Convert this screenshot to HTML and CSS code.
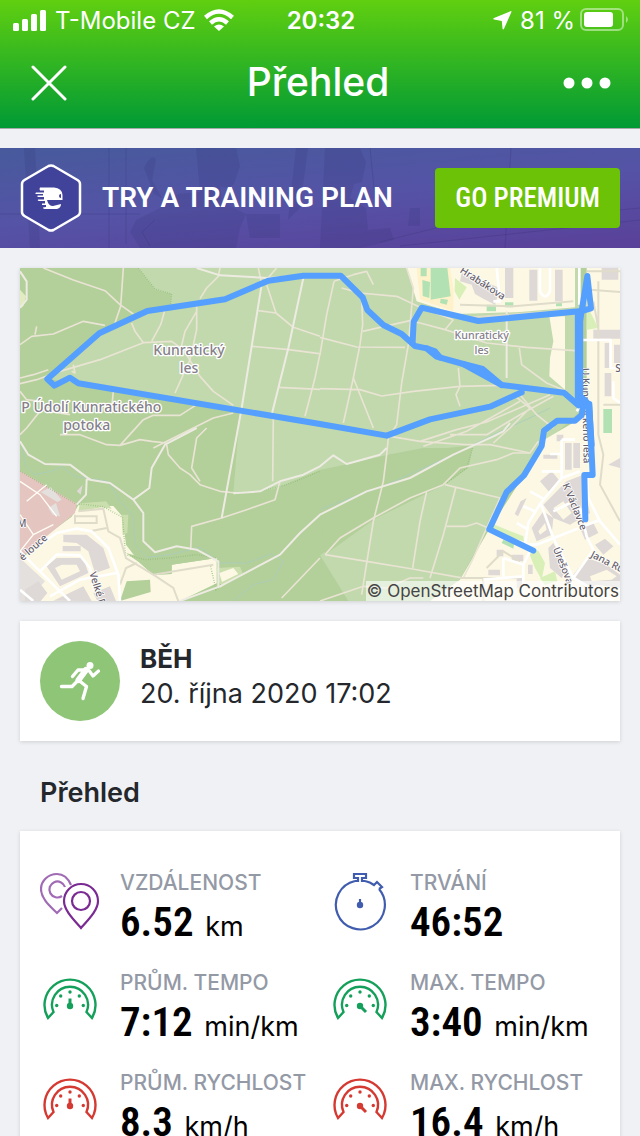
FILE: index.html
```
<!DOCTYPE html>
<html lang="cs">
<head>
<meta charset="utf-8">
<meta name="viewport" content="width=device-width, initial-scale=1">
<title>Přehled</title>
<link rel="stylesheet" href="styles.css">
</head>
<body>
<svg class="defs" aria-hidden="true">
  <defs>
    <g id="gauge" fill="none" stroke="currentColor" stroke-width="2.400">
      <path d="M5 40A25.500 25.500 0 1 1 49 40L43.500 34A18 18 0 1 0 10.500 34Z"/>
      <g fill="currentColor" stroke="none"><circle cx="13.700" cy="27.500" r="1.700"/><circle cx="17.700" cy="18" r="1.700"/><circle cx="27" cy="14" r="1.700"/><circle cx="36.300" cy="18" r="1.700"/><circle cx="40.300" cy="27.500" r="1.700"/><circle cx="27" cy="28" r="3.200"/></g>
    </g>
  </defs>
</svg>
<div class="app">
  <header class="top">
    <div class="status">
      <div class="carrier">
        <svg width="34" height="22" viewBox="0 0 34 22" fill="#fff"><rect x="0" y="14" width="6" height="8" rx="1.5"/><rect x="9" y="10" width="6" height="12" rx="1.5"/><rect x="18" y="5" width="6" height="17" rx="1.5"/><rect x="27" y="1" width="6" height="21" rx="1.5"/></svg>
        <span>T-Mobile CZ</span>
        <svg class="wifi" width="30" height="22" viewBox="0 0 30 22" fill="none" stroke="#fff" stroke-width="4.400"><path d="M1.500 8.500Q15-3.500 28.500 8.500"/><path d="M6.500 14Q15 6.500 23.500 14"/><path d="M15 22L10 17.500Q15 13.500 20 17.500Z" fill="#fff" stroke="none"/></svg>
      </div>
      <time class="clock">20:32</time>
      <div class="power">
        <svg width="19" height="19" viewBox="0 0 19 19" fill="#fff"><path d="M17.500.2Q19-.2 18.300 1.300L11 17.800Q10 19.200 9.500 17.400L8.800 10 1 8.600Q-.5 7.800 1 6.900Z"/></svg>
        <span>81 %</span>
        <svg class="battery" width="49" height="24" viewBox="0 0 49 24"><rect x="1" y="1" width="42" height="21" rx="5" fill="none" stroke="#fff" stroke-opacity=".45" stroke-width="2"/><rect x="4" y="4" width="29" height="15" rx="3" fill="#fff"/><path d="M46 8Q50 11.500 46 15Z" fill="#fff" fill-opacity=".45"/></svg>
      </div>
    </div>
    <nav class="bar">
      <button class="icon-btn" type="button" aria-label="Zavřít"><svg width="36" height="36" viewBox="0 0 36 36" stroke="#fff" stroke-width="3" stroke-linecap="round"><path d="M2 2L34 34M34 2L2 34"/></svg></button>
      <h1>Přehled</h1>
      <button class="icon-btn" type="button" aria-label="Další"><svg width="48" height="12" viewBox="0 0 48 12" fill="#fff"><circle cx="6" cy="6" r="5.500"/><circle cx="24" cy="6" r="5.500"/><circle cx="42" cy="6" r="5.500"/></svg></button>
    </nav>
  </header>
  <main class="content">
    <section class="promo">
      <svg class="promo-art" viewBox="0 0 640 100" preserveAspectRatio="xMidYMid slice" aria-hidden="true">
        <g fill="#2c2869" fill-opacity=".14"><path d="M24 0H35L40 100H30Z"/><path d="M196 0H236L240 18 234 36Q226 42 220 38L222 54 246 66 240 80 236 100H140L130 84 136 72 160 60 178 46 200 44Z"/><path d="M144 20Q152 4 156 12L152 32 162 50 154 46Z"/><path d="M246 66H280V90H250ZM296 0H308L300 60 288 72Z"/><path d="M325 0H360L366 14 362 34 354 36 350 50 366 60 368 82 390 80 394 92 360 100H320Z"/><path d="M410 60H420V78H408Z"/></g>
        <g fill="none" stroke="#2c2869" stroke-opacity=".2"><path d="M109 0V100M126 0V96M0 66H140M155 72L142 84 150 98M511 0L505 100M370 0L376 60M380 94L436 80 640 60"/><path d="M400 98L640 72"/></g>
      </svg>
      <svg class="emblem" width="62" height="68" viewBox="0 0 62 68"><path d="M28.500 2Q31 .8 33.500 2L57.500 16Q60 17.500 60 20V48Q60 50.500 57.500 52L33.500 66Q31 67.200 28.500 66L4.500 52Q2 50.500 2 48V20Q2 17.500 4.500 16Z" fill="#41439b" stroke="#fff" stroke-width="2.500"/><path d="M20 23.500H34Q42 24 42.500 31V36H27Q28.500 42 33 42L41 40Q41 44 37 45H26Q23 45 23 43.500L26 43V41H22V39.500H25V37H19Q17 36.500 18 35.500H24V33H17.500V31.500H23V30H16Q14.500 29.500 16 28.500H24V26.500H20Q19 25 20 23.500Z" fill="#fff"/><path d="M41 30A2 2 0 1 0 41 34Z" fill="#41439b"/></svg>
      <p>TRY A TRAINING PLAN</p>
      <button class="premium" type="button">GO PREMIUM</button>
    </section>

    <section class="map card" aria-label="Mapa">
      <svg class="map-art" viewBox="0 0 1800 999" preserveAspectRatio="xMidYMid slice">
        <rect width="1800" height="999" fill="#b3cf9a"/>
        <path fill="#c1d9ac" d="M355 0L405 65 455 78 450 115 380 130 238 196 82 333 175 346 660 424 640 676 760 664 900 606 1000 585 1104 560 1210 540 1358 540 1345 600 1280 645 1220 676 1060 750 900 862 985 999 1230 999 1320 935 1420 750 1540 560 1680 430V0Z"/>
        <path fill="#b3cf9a" d="M1110 560L1355 532 1340 600 1278 648 1065 752 915 860 900 720Z"/>
        <path fill="#e2ecc0" d="M0 65L18 85 10 115 0 120Z"/>
        <g fill="#fcf8e4">
          <path d="M1160 0L1190 100 1310 138 1500 132 1665 118V0ZM1700 0H1800V999H1230L1320 935 1410 780 1512 622 1565 520 1700 440ZM1588 145H1635V365L1588 325 1590 270 1600 220Z"/>
          <path d="M0 880L60 816 155 746 175 712 280 714 308 746 318 830 360 885 400 920 455 918V890L590 870V946L480 999H0Z"/>
        </g>
        <path fill="#e5c5c0" d="M0 608L170 706 165 735 0 870Z"/>
        <path fill="#e4e0de" d="M0 870L75 940 20 999H0ZM62 672L92 658 125 695 112 702ZM85 720L108 705 120 745 98 740Z"/>
        <path fill="#cadfad" d="M180 706L258 700 275 722 245 718 175 730ZM305 740H325L322 795 308 800ZM590 900L660 896 668 915 600 960Z"/>
        <path fill="#b3cf9a" d="M318 855L360 885 400 920 455 918V890L590 870 540 855 450 868 360 866ZM320 940L390 935 392 972 300 999Z"/>
        <path fill="#fcf8e4" d="M598 915L640 900 655 918 606 942Z"/>

        <g fill="#ded8d6">
          <path d="M80 895L110 870H190L205 915 120 955ZM15 965L55 940 82 975 62 999H15ZM100 998L190 955 215 999ZM220 975L270 955 288 999H232ZM130 800H200L250 840 270 900 225 915 205 850 170 825 130 822ZM128 834H182V850H128ZM170 670L188 650 182 680Z"/>
          <path d="M1325 15L1440 60 1425 110 1390 92 1365 78 1355 50 1320 40ZM1455 0H1480V90H1455ZM1528 5H1552V98H1528ZM1605 5H1628V100H1605ZM1745 0H1795V35H1745ZM1754 225H1768V300H1754ZM1782 230H1800V285H1782ZM1754 315H1774V385H1754ZM1720 185H1800V212H1720Z"/>
          <path d="M1635 525H1655V605H1635ZM1660 525H1680V600H1660ZM1610 500H1630V520H1610ZM1570 560H1612V572H1570ZM1560 640L1595 610 1620 640 1590 675ZM1502 700L1520 690 1494 745 1484 738ZM1535 780L1570 730 1600 750 1595 800 1550 820ZM1640 640L1690 620 1700 690 1710 735 1650 770 1600 750 1570 710ZM1680 780L1720 765 1735 795 1695 815ZM1725 830L1755 812 1780 835 1750 860ZM1585 840L1600 825 1640 900 1625 930 1590 900ZM1660 920L1700 870 1760 890 1800 920V960L1730 950 1700 965ZM1430 845H1450V865H1430ZM1405 905H1440V922H1405ZM1475 860H1510V880H1475ZM1524 890H1538V918H1524ZM1490 930H1512V960H1490ZM1765 590L1800 570V600Z"/>
        </g>
        <path fill="#fcf8e4" d="M105 900L125 890H170L180 910 125 935ZM1555 790L1575 765 1580 785 1560 800ZM1600 720L1630 700 1655 735 1630 755ZM1710 925L1760 905 1790 925 1775 935 1715 940Z"/>
        <path fill="#fff1ca" d="M1190 0H1290L1300 60 1300 130 1200 95Z"/>
        <path fill="#b2e2b4" d="M1202 0H1220V25H1202ZM1232 0H1282L1292 85 1232 95ZM1207 36L1230 42 1228 90 1208 84ZM1262 92L1284 95 1280 110 1260 105ZM1400 110H1428V130H1400ZM1455 103H1480V118H1455ZM1608 102H1626V115H1608ZM1750 423H1776V495H1750ZM1450 815L1482 828 1480 842 1445 825Z"/>
        <path fill="#d8efb8" d="M1305 30L1340 58 1318 95 1304 70ZM1702 115L1735 180 1700 185ZM1418 768L1510 805 1512 820 1410 790ZM1525 850L1555 848 1575 885 1565 935 1545 900ZM1560 930L1605 910 1612 940 1575 950Z"/>

        <g fill="none" stroke="#a9cdbd" stroke-width="2.500">
          <path d="M5 530L18 595 42 620 95 610 125 595 165 625 210 632 265 640 300 700 340 745 345 830 380 868 450 860 540 838 600 885 680 885 755 858 790 880 760 935 700 950 640 999"/>
          <path d="M900 724L1100 650 1300 560 1420 500 1540 445 1590 420"/>
        </g>
        <g fill="none" stroke="#8fbd78" stroke-width="4" stroke-dasharray="2 5">
          <path d="M355 0L405 63 455 78 452 110M0 610L165 706 250 716 308 748 316 860 375 875 450 870 530 860 590 870M572 895L588 965 604 945M640 674L715 670 800 650 900 610M1358 540L1340 600 1280 645"/>
        </g>

        <g fill="none" stroke="#e9e4d4" stroke-width="5" stroke-linejoin="round">
          <path d="M70 0L160 36 255 68 300 110 340 138"/><path d="M310 0L302 115 285 165"/>
          <path d="M0 230L35 205 100 198 190 160 255 172"/><path d="M50 175L45 200"/>
          <path d="M0 347L50 335 120 310 240 275 370 224 455 220 490 245 540 325 580 370 640 412"/>
          <path d="M335 165L345 190 370 224M435 125L422 170 395 220M530 115V185L510 275 465 375M530 130L495 190 483 240"/>
          <path d="M600 0L595 25 560 60 540 92"/>
          <path d="M715 0L723 38 735 40 770 0M740 50L768 135 715 128M768 135L820 178 900 205M695 235L800 244 898 257M900 257L885 330 855 445M775 358L900 364M0 330L40 320 85 305M155 310L165 315 160 290"/>
          <path d="M0 370L20 395 60 400 90 430 150 440M0 500L20 480 60 430 120 410M120 500L180 500 260 530 300 532 370 455M300 532L360 515 395 520 440 525M370 455L400 442H480L530 410M280 370L275 420"/>
          <path d="M440 530L445 560 480 600 510 620 540 650 600 670 650 675M640 435L580 450 520 480 400 540M560 480L530 510 515 600 540 640M760 450L758 640"/>
          <path d="M605 750L680 725 765 695 780 640M605 750L515 775 512 845M785 990L900 870"/>
          <path d="M942 40L1000 20 1040 10 1060 50"/>
          <path d="M965 60L1020 75 1130 85 1205 120 1300 155"/><path d="M1025 90L1028 170 1020 230 1000 330 1060 480"/>
          <path d="M900 208L1010 237 1155 238M1028 190L1170 158 1200 165 1275 185 1300 155M1275 185L1400 225 1520 238 1665 248M1498 240L1505 290 1580 345 1640 370"/>
          <path d="M900 362L1020 365 1085 384 1180 370 1320 355 1440 352M1000 330L970 465M1315 300L1320 355 1308 380 1320 415"/>
          <path d="M942 40L920 140 900 260"/>
          <path d="M1105 510L1100 560 1090 640 1060 760 1025 980M1110 505L1200 520 1335 530 1410 530 1530 555M1200 520L1310 485 1400 462 1590 380M1210 535L1340 490 1500 400M1290 500L1400 500 1500 440 1600 385M1420 525L1470 480 1530 420 1480 380M1500 380L1550 440 1600 480"/>
          <path d="M1275 650L1440 690M1220 670L1200 760 1178 900M1307 660L1270 800 1230 930M1280 775L1340 775 1370 765 1405 780"/>
          <path d="M915 860L960 810 1060 750 1170 690 1270 650 1320 600 1430 575 1480 555 1530 555 1555 520"/>
          <path d="M915 860L1040 880 1178 903 1300 925 1330 930M900 999L1030 955 1100 960 1170 930 1210 930M1330 930L1360 870 1440 690"/>
          <path d="M1160 0L1180 60 1165 230 1145 345 1130 470 1105 510"/>
        </g>
        <g fill="none" stroke="#eeebe3" stroke-width="6" stroke-linejoin="round">
          <path d="M530 0L600 22 745 30 900 18M725 50L665 420 605 750M850 30L805 240 755 440"/>
          <path d="M0 520L25 560 75 588 150 590 210 635 270 645 340 695 370 735 370 820 405 853 470 835 530 845 595 880V955"/>
          <path d="M340 695L388 660 395 600 435 530 530 480"/>
          <path d="M640 676L720 670 780 640 850 620 900 595 940 562 980 588 1080 560 1100 540"/>
          <path d="M480 999L600 955 780 860 840 795 900 740 1040 670 1170 630 1300 560 1420 505 1450 490 1470 465"/>
          <path d="M1460 130V330M0 10L20 40 20 95 0 120M170 710L198 680 200 635 212 632"/>
        </g>
        <g fill="none" stroke="#e0dcca" stroke-width="6"><path d="M175 730L250 722 265 790 300 810 318 870 400 920 580 890M210 790L260 780M165 740V765H230V745H165M300 950L318 900 350 885M400 920L460 960 475 999M1320 150L1470 140 1665 125M1320 110L1480 115 1660 100M1700 10L1800 10M1710 65L1800 72M1720 100L1735 180M1735 40V500L1750 560 1740 650 1800 760M1750 410H1800"/><path d="M1320 930H1500M1390 999V930M1400 900L1450 850 1500 880"/></g>
        <g fill="none" stroke="#fffdf6" stroke-width="4"><path d="M0 640L60 680 110 745M20 700L80 650M0 740L40 800 100 770M40 800L0 850"/></g>
        <g fill="none" stroke="#fff" stroke-width="8" stroke-linejoin="round">
          <path d="M60 830L110 795 170 782 215 790 265 840 295 920 300 999M0 850L60 910 120 970 150 999M60 910L110 860 180 862 210 900 222 970M90 985L180 935 290 915M0 965L40 999"/>
          <path d="M1430 0L1440 100H1420M1560 0V70Q1575 100 1590 70V0M1678 0V110M1690 216H1772V300H1800M1780 340V390L1800 405M1690 400L1670 430"/>
          <path d="M1625 515H1665M1625 515V630M1565 610H1625M1590 558H1625M1530 670L1575 695M1510 715L1545 730M1490 765L1525 785M1625 630L1562 705 1600 810 1660 930 1720 845 1700 805 1680 720M1625 630L1680 610M1562 705L1525 765 1515 830 1550 830 1740 755M1700 620L1705 690 1740 760 1800 830M1660 930L1780 999M1530 850L1510 890V999M1450 870V930M1450 870L1510 890M1390 935L1510 925M1600 730L1650 705"/>
        </g>

        <g class="map-road">
          <text x="1318" y="12" transform="rotate(33 1318 12)">Hrabákova</text>
          <text x="8" y="880" transform="rotate(-42 8 880)">é louce</text>
          <text x="208" y="915" transform="rotate(73 208 915)">Velké P</text>
          <text x="1686" y="300" transform="rotate(89 1686 300)">U Kunratického lesa</text>
          <text x="1627" y="650" transform="rotate(68 1627 650)">K Václavce</text>
          <text x="1598" y="842" transform="rotate(68 1598 842)">Úrešova</text>
          <text x="1710" y="866" transform="rotate(27 1710 866)">Jana Růž</text>
          <text x="-8" y="776">M</text>
          <text x="1786" y="312">S</text>
        </g>
        <g fill="none" stroke="#559ffe" stroke-width="18" stroke-linejoin="round" stroke-linecap="round">
          <path d="M1540 848L1408 784 1460 672 1512 622 1565 534 1572 488 1612 458H1665L1685 441 1690 410"/>
          <path d="M1675 412L1632 374 1445 351 1330 288 1250 266 1220 241 1185 234 1145 198 1090 171 1042 126 1028 88 962 23H850L745 38 615 94 382 129 238 196 82 333 103 353 150 329 175 346 900 468 1100 503 1230 454 1410 416 1505 373"/>
          <path d="M1178 220L1181 161 1205 119 1375 159 1685 129 1713 121 1702 24 1680 160"/>
          <path d="M1330 288L1388 303 1445 351M1220 241L1245 250 1260 268"/>
          <path d="M1360 300L1400 320" stroke-width="22"/>
          <path d="M1677 140V405" stroke-width="25"/>
          <path d="M1686 390L1706 410 1714 530" stroke-width="20"/>
          <path d="M1708 408L1718 621H1693L1696 754"/>
        </g>
        <g class="map-place" text-anchor="middle">
          <text x="507" y="260">Kunratický</text><text x="507" y="314">les</text>
          <text x="214" y="431">P Údolí Kunratického</text><text x="200" y="485">potoka</text>
        </g>
        <g class="map-place small" text-anchor="middle"><text x="1385" y="214">Kunratický</text><text x="1385" y="259">les</text></g>
      </svg>
      <small>© OpenStreetMap Contributors</small>
    </section>

    <section class="activity card">
      <svg width="80" height="80" viewBox="0 0 80 80"><circle cx="40" cy="40" r="40" fill="#8fc577"/><g fill="none" stroke="#fff" stroke-linecap="round" stroke-linejoin="round"><circle cx="50" cy="24.500" r="3.500" fill="#fff" stroke="none"/><path d="M21.500 45.500H32L38 39.500" stroke-width="3.400"/><path d="M46 29L38.500 39" stroke-width="6"/><path d="M48 29H38L32.500 35.500M39 39.500L46.500 45.500 43 57.500" stroke-width="3.400"/><path d="M49 29.500L53 35 58.500 30" stroke-width="3.200"/></g></svg>
      <div><h2>BĚH</h2><time datetime="2020-10-20T17:02">20. října 2020 17:02</time></div>
    </section>

    <h2 class="section-title">Přehled</h2>
    <dl class="stats card">
      <div class="stat">
        <svg width="60" height="60" viewBox="0 -1 60 60" fill="none" stroke-width="2.200"><g stroke="#a06bb4"><path d="M31 13C28 6 23 2 17 2C8 2 1 9 1 17C1 27 11 35 17 41L22 36"/><path d="M22 24A8 8 0 1 1 25 15"/></g><g stroke="#7a2a92"><path d="M41 56C33 47 24 38 24 29A17 17 0 0 1 58 29C58 38 49 47 41 56Z"/><circle cx="41" cy="29" r="9"/></g></svg>
        <dt>VZDÁLENOST</dt><dd><b>6.52</b> <span>km</span></dd>
      </div>
      <div class="stat">
        <svg width="60" height="60" viewBox="0 -1 60 60" fill="none" stroke="#405cae" stroke-width="2.200"><path d="M25 9A24.500 24.500 0 1 0 49 17M25 9H28V6H24V2H36V6H32V9H35"/><path d="M35 9Q40 10 44 13L47 10 52 15 49 17"/><path d="M30 33V27"/><circle cx="30" cy="33" r="3.200" fill="#405cae" stroke="none"/></svg>
        <dt>TRVÁNÍ</dt><dd><b>46:52</b></dd>
      </div>
      <div class="stat pace">
        <svg width="60" height="60" viewBox="-3 -7 60 60"><use href="#gauge"/><path d="M27 28V20.500" stroke="currentColor" stroke-width="3"/></svg>
        <dt>PRŮM. TEMPO</dt><dd><b>7:12</b> <span>min/km</span></dd>
      </div>
      <div class="stat pace">
        <svg width="60" height="60" viewBox="-3 -7 60 60"><use href="#gauge"/><path d="M27 28L33 34" stroke="currentColor" stroke-width="3"/></svg>
        <dt>MAX. TEMPO</dt><dd><b>3:40</b> <span>min/km</span></dd>
      </div>
      <div class="stat speed">
        <svg width="60" height="60" viewBox="-3 -7 60 60"><use href="#gauge"/><path d="M27 28V20.500" stroke="currentColor" stroke-width="3"/></svg>
        <dt>PRŮM. RYCHLOST</dt><dd><b>8.3</b> <span>km/h</span></dd>
      </div>
      <div class="stat speed">
        <svg width="60" height="60" viewBox="-3 -7 60 60"><use href="#gauge"/><path d="M27 28L33 34" stroke="currentColor" stroke-width="3"/></svg>
        <dt>MAX. RYCHLOST</dt><dd><b>16.4</b> <span>km/h</span></dd>
      </div>
    </dl>
  </main>
</div>
</body>
</html>
```
FILE: styles.css
```
* { box-sizing: border-box; margin: 0; padding: 0; }
body { background: #f0f1f4; color: #24282c; font-family: Inter, Roboto, sans-serif; }
button { border: 0; background: none; color: inherit; font: inherit; cursor: pointer; }
svg { display: block; flex: none; }
.defs { position: absolute; width: 0; height: 0; }
.app { display: flex; flex-direction: column; height: 100vh; }

.top { flex: none; color: #fff; background: linear-gradient(#60cf10, #009a35); border-bottom: 1px solid #a6aaa8; }
.status { display: grid; grid-template-columns: 1fr auto 1fr; align-items: center; height: 40px; padding: 0 11px 0 13px; font-size: 24px; }
.carrier, .power { display: flex; align-items: center; gap: 8px; }
.power { justify-content: flex-end; }
.battery { margin-left: -3px; }
.clock { font-weight: 600; }
.bar { display: flex; align-items: center; justify-content: space-between; height: 88px; padding: 0 28px 2px 24px; }
.icon-btn { display: grid; place-items: center; width: 50px; height: 60px; }
.bar h1 { padding-bottom: 2px; font-size: 39px; font-weight: 500; line-height: 44px; }

.content { flex: 1; min-height: 0; overflow-y: auto; scrollbar-width: none; padding-top: 19px; }
.card { margin: 0 20px; background: #fff; box-shadow: 0 1px 4px rgba(0, 0, 0, .14); }

.promo { position: relative; display: flex; align-items: center; height: 100px; padding: 0 20px; color: #fff; background: linear-gradient(175deg, #475a9c, #5553a6 50%, #5a4099); }
.promo-art { position: absolute; inset: 0; width: 100%; height: 100%; }
.emblem, .promo p, .premium { position: relative; }
.promo p { margin-left: 20px; font: 600 28px/32px Roboto, sans-serif; white-space: nowrap; }
.premium { margin-left: auto; height: 60px; padding: 0 20px; border-radius: 4px; background: #6cc207; font: 500 27px/32px "Roboto Condensed", "Liberation Sans Narrow", Roboto, sans-serif; white-space: nowrap; }

.map { position: relative; margin-top: 20px; }
.map-art { width: 100%; height: auto; overflow: hidden; }
.map small { position: absolute; right: 0; bottom: 0; padding: 0 1px; background: rgba(255, 255, 255, .6); color: #444; font-size: 17px; line-height: 20px; }
.map-place { font: 500 42px "Noto Sans", sans-serif; fill: #85808a; stroke: #fff; stroke-width: 8px; stroke-linejoin: round; paint-order: stroke; }
.map-place.small { font-size: 32px; }
.map-road { font: 500 30px "Noto Sans", sans-serif; fill: #66606a; stroke: #fff; stroke-width: 5px; stroke-linejoin: round; paint-order: stroke; }

.activity { display: flex; gap: 20px; margin-top: 20px; padding: 20px; }
.activity h2 { font-size: 26px; font-weight: 700; line-height: 36px; }
.activity time { display: block; font-size: 27px; line-height: 34px; }

.section-title { margin: 32px 40px 19px; font-size: 27px; font-weight: 600; line-height: 39px; }

.stats { display: grid; grid-template-columns: 1fr 1fr; column-gap: 10px; padding: 40px 10px 20px 20px; }
.stat { display: grid; grid-template-columns: 60px 1fr; grid-template-rows: 24px 76px; column-gap: 20px; color: #405cae; }
.stat svg { grid-row: 1 / 3; }
.stat dt { color: #9499a6; font-size: 21px; line-height: 24px; font-weight: 500; white-space: nowrap; }
.stat dd { color: #000; font-size: 27px; line-height: 54px; white-space: nowrap; }
.stat b { margin-right: 4px; font: 600 41px/54px "Roboto Condensed", "Liberation Sans Narrow", Roboto, sans-serif; }
.stat.pace { color: #14a05a; }
.stat.speed { color: #d53a32; }
```
